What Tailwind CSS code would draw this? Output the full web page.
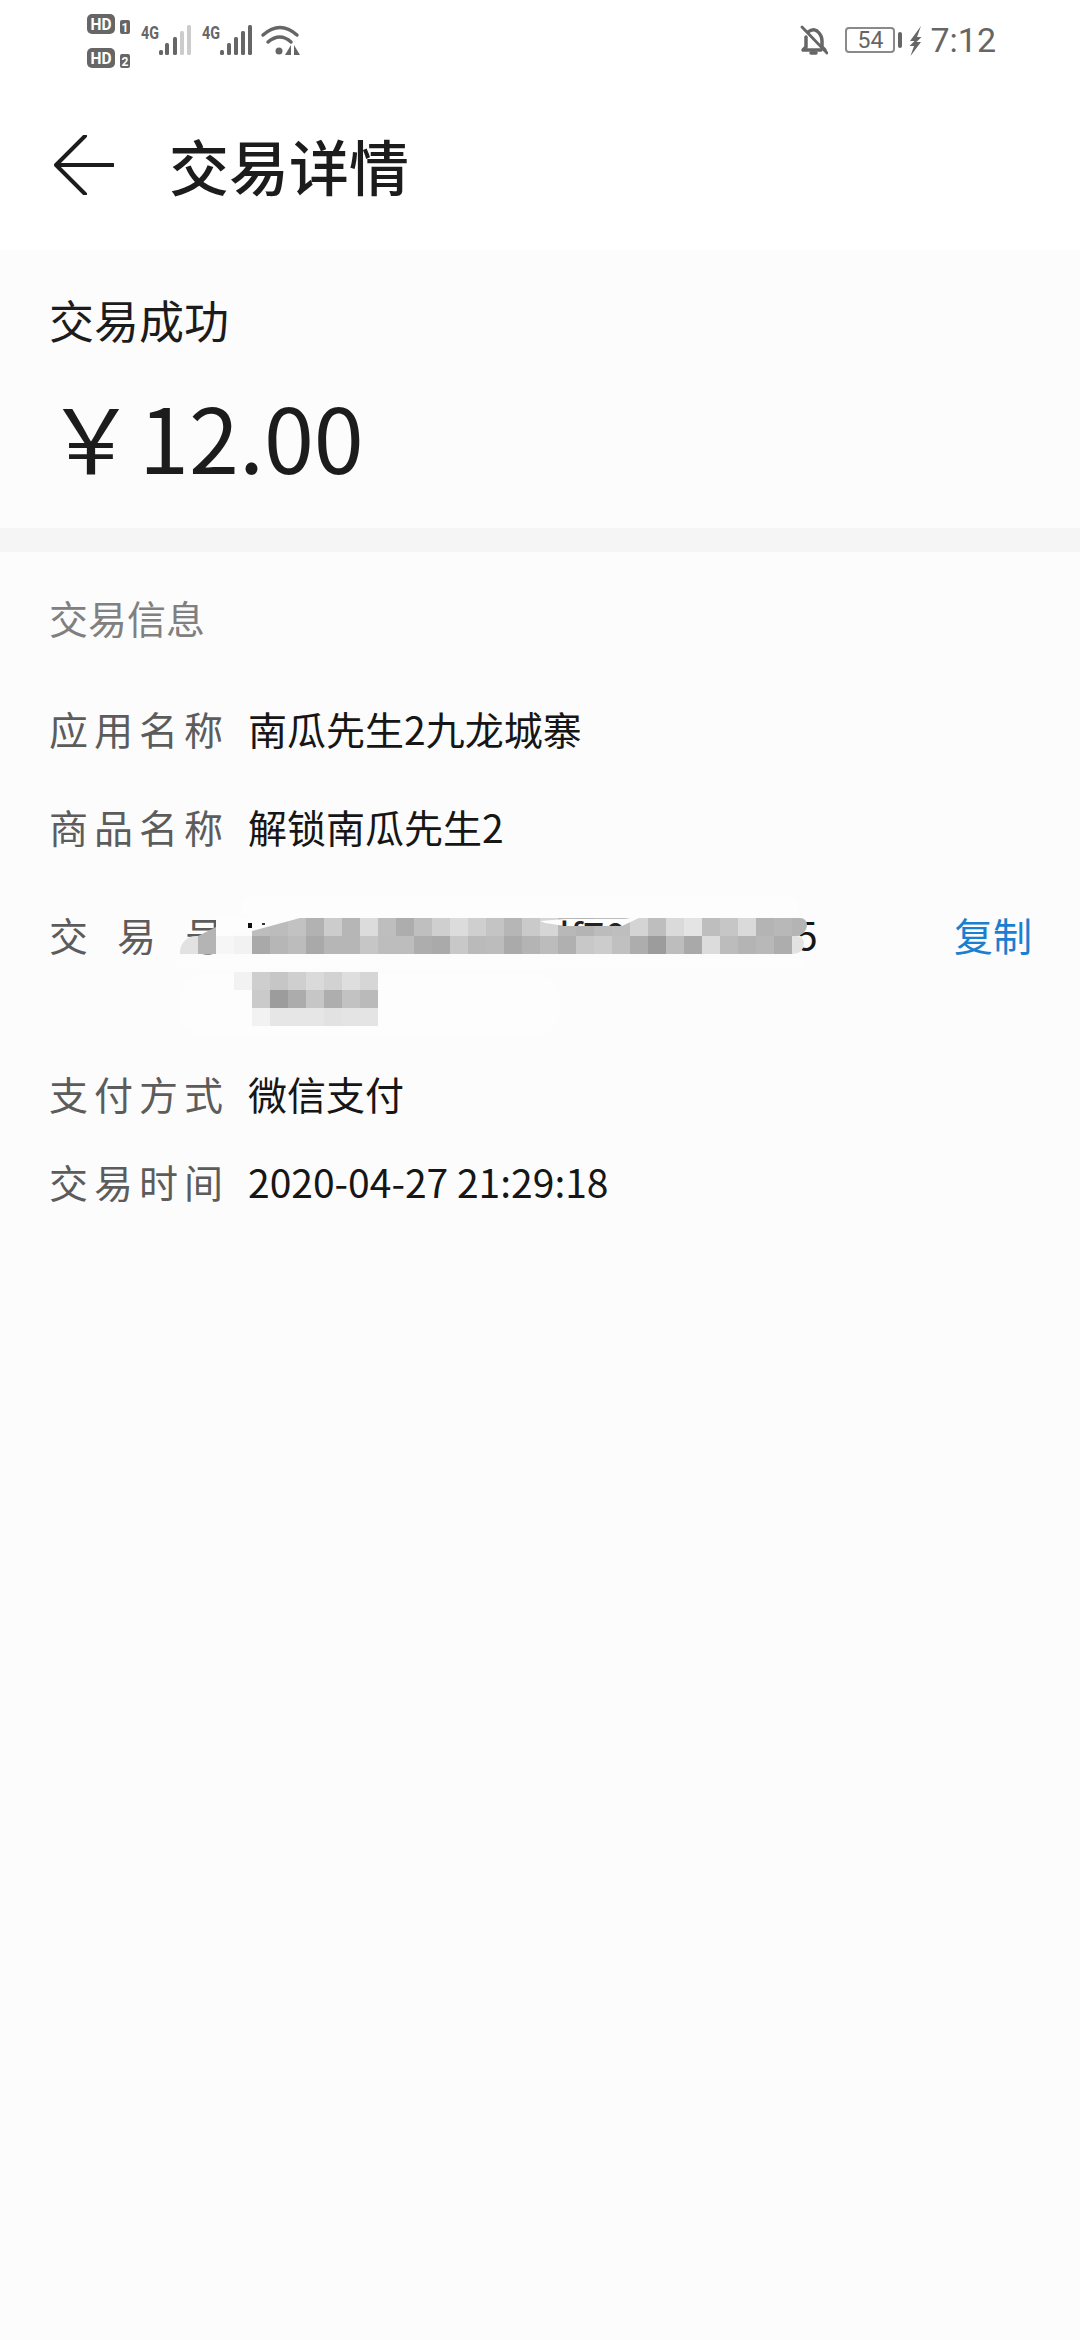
<!DOCTYPE html>
<html lang="zh">
<head>
<meta charset="utf-8">
<script src="https://cdn.jsdelivr.net/npm/@tailwindcss/browser@4"></script>
</head>
<body class="m-0 bg-[#fcfcfc]">
<div class="relative w-[1080px] h-[2340px] overflow-hidden bg-[#fcfcfc] font-['Noto_Sans_CJK_SC','Noto_Sans',sans-serif]">

  <!-- status bar -->
  <div class="h-[80px] bg-white flex items-start justify-between pl-[87px] pr-[84px] pt-[12px]">
    <svg class="w-[225px] h-[60px]" viewBox="87 12 225 60" fill="#666666">
      <rect x="87" y="14" width="28" height="20" rx="5"/>
      <text x="101" y="30" text-anchor="middle" font-family="Roboto" font-weight="700" font-size="17" fill="#fff" textLength="21" lengthAdjust="spacingAndGlyphs">HD</text>
      <rect x="120" y="20" width="10" height="14" rx="2"/>
      <text x="125" y="32" text-anchor="middle" font-family="Roboto" font-weight="700" font-size="12" fill="#fff">1</text>
      <rect x="87" y="48" width="28" height="20" rx="5"/>
      <text x="101" y="64" text-anchor="middle" font-family="Roboto" font-weight="700" font-size="17" fill="#fff" textLength="21" lengthAdjust="spacingAndGlyphs">HD</text>
      <rect x="120" y="54" width="10" height="14" rx="2"/>
      <text x="125" y="66" text-anchor="middle" font-family="Roboto" font-weight="700" font-size="12" fill="#fff">2</text>

      <text x="141" y="39" font-family="Roboto" font-weight="700" font-size="19" textLength="18" lengthAdjust="spacingAndGlyphs">4G</text>
      <rect x="159" y="50" width="4" height="5" rx="1.5"/>
      <rect x="165" y="43" width="4" height="12" rx="1.5"/>
      <rect x="173" y="37" width="4" height="18" rx="1.5"/>
      <rect x="180" y="31" width="4" height="24" rx="1.5" fill="#cccccc"/>
      <rect x="187" y="25" width="4" height="30" rx="1.5" fill="#cccccc"/>

      <text x="202" y="39" font-family="Roboto" font-weight="700" font-size="19" textLength="18" lengthAdjust="spacingAndGlyphs">4G</text>
      <rect x="220" y="50" width="4" height="5" rx="1.5"/>
      <rect x="227" y="43" width="4" height="12" rx="1.5"/>
      <rect x="234" y="37" width="4" height="18" rx="1.5"/>
      <rect x="241" y="31" width="4" height="24" rx="1.5"/>
      <rect x="248" y="25" width="4" height="30" rx="1.5"/>

      <path d="M263 35 Q280 20 297 35" fill="none" stroke="#666666" stroke-width="3.5" stroke-linecap="round"/>
      <path d="M268 42 Q280 32 291 42" fill="none" stroke="#666666" stroke-width="3.5" stroke-linecap="round"/>
      <circle cx="279" cy="51" r="3.5"/>
      <path d="M291 45 V55 H285 Z"/>
      <path d="M294 45 V55 H300 Z"/>
    </svg>

    <div class="flex items-start">
      <svg class="w-[28px] h-[32px] mt-[12px]" viewBox="801 24 28 32" fill="none" stroke="#666666" stroke-width="3.5" stroke-linecap="round" stroke-linejoin="round">
        <path d="M809 32 Q814 28 818 31 Q823 35 823 41 V47 L826 50"/>
        <path d="M807 37 V47 L804 50 H822"/>
        <path d="M812 53 H817"/>
        <path d="M803 27 L828 53" stroke-width="2.8"/>
      </svg>
      <div class="ml-[17px] mt-[15px] w-[50px] h-[26px] rounded-[4px] border-2 border-[#8a8a8a] flex items-center justify-center font-['Roboto',sans-serif] text-[23px] leading-none text-[#666666]">54</div>
      <div class="ml-[3px] mt-[20px] w-[4px] h-[16px] rounded-[2px] bg-[#666666]"></div>
      <svg class="ml-[7px] mt-[14px] w-[13px] h-[30px]" viewBox="0 0 13 30" fill="#666666"><path d="M12 0 L1 15 H5.5 L0.5 20 H5 L1.5 30 L12 16 H7.5 L12.5 11 H8 Z"/></svg>
      <span class="ml-[8px] mt-[6px] font-['Roboto',sans-serif] text-[34px] leading-[44px] text-[#666666]">7:12</span>
    </div>
  </div>

  <!-- title bar -->
  <header class="h-[170px] bg-white flex items-center pl-[54px] text-[#1c1c1c]">
    <svg class="w-[60px] h-[60px]" viewBox="0 0 60 60" fill="none" stroke="#1c1c1c" stroke-width="4" stroke-linecap="round" stroke-linejoin="round">
      <path d="M59 30 H2 M31 1 L2 30 L31 59"/>
    </svg>
    <h1 class="ml-[55px] text-[60px] leading-none font-medium">交易详情</h1>
  </header>

  <!-- summary -->
  <section class="h-[278px] pl-[49px] text-[#1c1c1c]">
    <p class="pt-[45px] text-[45px] leading-[50px]">交易成功</p>
    <p class="mt-[30px] flex items-center leading-[120px] text-[90px]"><span class="ml-[-3px] mr-[3px]">￥</span><span>12.00</span></p>
  </section>

  <div class="h-[24px] bg-[#f5f5f5]"></div>

  <!-- info -->
  <section class="relative pl-[49px] pr-[48px] text-[39px]">
    <h2 class="pt-[40px] leading-[50px] text-[#808080]">交易信息</h2>
    <div class="mt-[61px] flex h-[50px] items-center"><span class="w-[199px] whitespace-nowrap tracking-[6px] text-[#5c5c5c]">应用名称</span><span class="text-[#161616]">南瓜先生2九龙城寨</span></div>
    <div class="mt-[48px] flex h-[50px] items-center"><span class="w-[199px] whitespace-nowrap tracking-[6px] text-[#5c5c5c]">商品名称</span><span class="text-[#161616]">解锁南瓜先生2</span></div>
    <div class="mt-[58px] flex h-[50px] items-center justify-between">
      <div class="flex items-center"><span class="w-[199px] whitespace-nowrap tracking-[29px] text-[#5c5c5c]">交易号</span><span class="ml-[548px] text-[#161616]">5</span></div>
      <span class="text-[#1a7fd0]">复制</span>
    </div>
    <div class="mt-[109px] flex h-[50px] items-center"><span class="w-[199px] whitespace-nowrap tracking-[6px] text-[#5c5c5c]">支付方式</span><span class="text-[#161616]">微信支付</span></div>
    <div class="mt-[38px] flex h-[50px] items-center"><span class="w-[199px] whitespace-nowrap tracking-[6px] text-[#5c5c5c]">交易时间</span><span class="text-[#161616]">2020-04-27 21:29:18</span></div>
  </section>

  <!-- redaction smudge -->
  <div class="absolute left-[240px] top-[895px] w-[560px] h-[24px] rounded-[12px] bg-white/50 blur-[6px]"></div>
  <div class="absolute left-[170px] top-[955px] w-[640px] h-[18px] bg-white/30 blur-[4px]"></div>
  <div class="absolute left-[170px] top-[965px] w-[400px] h-[80px] rounded-[30px] bg-white/30 blur-[10px]"></div>

  <!-- mosaic -->
  <div class="absolute left-[180px] top-[918px] grid grid-cols-[repeat(35,18px)] auto-rows-[18px]">
    <div></div><div></div><div></div><div></div>
    <div class="bg-[#bdbdbd]"></div><div class="bg-[#bcbcbc]"></div><div class="bg-[#c2c2c2]"></div><div class="bg-[#b2b2b2]"></div><div class="bg-[#cccccc]"></div><div class="bg-[#b6b6b6]"></div><div class="bg-[#dcdcdc]"></div><div class="bg-[#bebebe]"></div><div class="bg-[#adadad]"></div><div class="bg-[#bfbfbf]"></div><div class="bg-[#cfcfcf]"></div><div class="bg-[#dcdcdc]"></div><div class="bg-[#cfcfcf]"></div><div class="bg-[#c4c4c4]"></div><div class="bg-[#b6b6b6]"></div><div class="bg-[#cacaca]"></div><div class="bg-[#d6d6d6]"></div><div class="bg-[#b8b8b8]"></div><div class="bg-[#b4b4b4]"></div><div class="bg-[#bcbcbc]"></div><div class="bg-[#bebebe]"></div><div class="bg-[#d4d4d4]"></div><div class="bg-[#bebebe]"></div><div class="bg-[#dadada]"></div><div class="bg-[#e4e4e4]"></div><div class="bg-[#bebebe]"></div><div class="bg-[#c6c6c6]"></div><div class="bg-[#dadada]"></div><div class="bg-[#b4b4b4]"></div><div class="bg-[#b8b8b8]"></div><div class="bg-[#b4b4b4] w-[15px] rounded-tr-[8px] rounded-br-[14px]"></div>
    <div class="bg-[#e2e2e2] rounded-tl-[16px]"></div><div class="bg-[#b4b4b4]"></div><div class="bg-[#f6f6f6]"></div><div class="bg-[#f2f2f2]"></div>
    <div class="bg-[#a9a9a9]"></div><div class="bg-[#b6b6b6]"></div><div class="bg-[#bcbcbc]"></div><div class="bg-[#a9a9a9]"></div><div class="bg-[#b6b6b6]"></div><div class="bg-[#b6b6b6]"></div><div class="bg-[#c6c6c6]"></div><div class="bg-[#bdbdbd]"></div><div class="bg-[#bdbdbd]"></div><div class="bg-[#adadad]"></div><div class="bg-[#aaaaaa]"></div><div class="bg-[#c8c8c8]"></div><div class="bg-[#bababa]"></div><div class="bg-[#bcbcbc]"></div><div class="bg-[#aaaaaa]"></div><div class="bg-[#b4b4b4]"></div><div class="bg-[#bcbcbc]"></div><div class="bg-[#b0b0b0]"></div><div class="bg-[#c8c8c8]"></div><div class="bg-[#cccccc]"></div><div class="bg-[#c0c0c0]"></div><div class="bg-[#adadad]"></div><div class="bg-[#9c9c9c]"></div><div class="bg-[#bdbdbd]"></div><div class="bg-[#a9a9a9]"></div><div class="bg-[#dcdcdc]"></div><div class="bg-[#bcbcbc]"></div><div class="bg-[#b4b4b4]"></div><div class="bg-[#b8b8b8]"></div><div class="bg-[#adadad]"></div><div class="bg-[#e2e2e2] w-[12px] rounded-tr-[10px] rounded-br-[14px]"></div>
  </div>
  <div class="absolute left-[234px] top-[972px] grid grid-cols-[repeat(8,18px)] auto-rows-[18px]">
    <div class="bg-[#f2f2f2]"></div><div class="bg-[#cecece]"></div><div class="bg-[#c6c6c6]"></div><div class="bg-[#cfcfcf]"></div><div class="bg-[#dadada]"></div><div class="bg-[#d2d2d2]"></div><div class="bg-[#dedede]"></div><div class="bg-[#d6d6d6]"></div>
    <div></div><div class="bg-[#cacaca]"></div><div class="bg-[#9c9c9c]"></div><div class="bg-[#acacac]"></div><div class="bg-[#c6c6c6]"></div><div class="bg-[#aeaeae]"></div><div class="bg-[#c2c2c2]"></div><div class="bg-[#bababa]"></div>
    <div></div><div class="bg-[#f2f2f2]"></div><div class="bg-[#e6e6e6]"></div><div class="bg-[#e6e6e6]"></div><div class="bg-[#e6e6e6]"></div><div class="bg-[#e2e2e2]"></div><div class="bg-[#e4e4e4]"></div><div class="bg-[#e4e4e4]"></div>
  </div>

  <!-- smudge edges on the mosaic's top row -->
  <svg class="absolute left-[170px] top-[905px] w-[660px] h-[40px]" viewBox="170 905 660 40">
    <path fill="#fdfdfd" d="M216 918 H300 L252 931 L234 933 V936 H216 Z"/>
    <path fill="#b4b4b4" d="M198 936 L216 927 V936 Z"/>
    <path fill="#fdfdfd" d="M540 921 L565 919 H625 L636 917 H641 L622 926 H565 L545 923 Z"/>
    <rect x="248" y="923" width="4" height="5" fill="#111111"/>
    <rect x="262" y="923" width="3" height="2" fill="#333333"/>
  </svg>
  <div class="absolute left-[559px] top-[920px] h-[6px] overflow-hidden text-[39px] leading-[50px] text-[#222222]"><span class="block mt-[-10px]">lf70</span></div>
</div>
</body>
</html>
